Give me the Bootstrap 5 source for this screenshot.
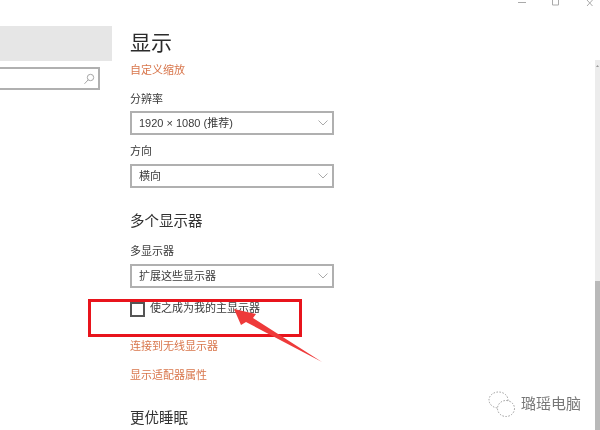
<!DOCTYPE html>
<html lang="zh-CN">
<head>
  <meta charset="UTF-8">
  <title>显示</title>
  <link href="https://cdn.jsdelivr.net/npm/bootstrap@5.3.3/dist/css/bootstrap.min.css" rel="stylesheet">
  <style>
    html, body { height: 100%; overflow: hidden; }
    body { font-family: "Liberation Sans", "Noto Sans CJK SC", sans-serif; color: #333; background: #fff; }
    .shot { width: 600px; height: 430px; overflow: hidden; filter: blur(0.5px); }
    .side-pane { width: 130px; padding-top: 26px; }
    .side-home { width: 112px; height: 35px; background: #e6e6e6; }
    .side-search { width: 100px; height: 23px; margin-top: 6px; border: 2px solid #b0b0b0; border-left: 0; padding-right: 3px; }
    .main-pane { width: 204px; padding-top: 28px; }
    .page-title { font-size: 21px; line-height: 30px; font-weight: 400; margin: 0; color: #2b2b2b; }
    .link-orange { display: block; font-size: 11px; line-height: 16px; color: #d8764c; text-decoration: none; }
    .field-label { font-size: 11px; line-height: 16px; color: #3a3a3a; }
    .fake-select { height: 24px; border: 2px solid #b0b0b0; padding: 0 4px 0 7px; font-size: 11px; color: #3a3a3a; }
    .sub-title { font-size: 14.5px; line-height: 20px; color: #333; margin: 0; font-weight: 400; }
    .tick-box { width: 15px; height: 15px; border: 2px solid #555; flex: none; }
    .tick-row { gap: 5px; margin-top: 14px; }
    .tick-row .field-label { line-height: 13px; }
    .sp-4 { margin-top: 4px; }
    .sp-5 { margin-top: 5px; }
    .sp-8 { margin-top: 8px; }
    .sp-12 { margin-top: 12px; }
    .sp-13 { margin-top: 13px; }
    .sp-21 { margin-top: 21px; }
    .sp-23 { margin-top: 23px; }
    .sp-25 { margin-top: 25px; }
    .scroll-track { width: 5px; height: 370px; margin-top: 60px; background: #ececec; padding-top: 221px; }
    .scroll-thumb { height: 149px; background: #b9b9b9; }
    .scroll-up { left: 596px; top: 65px; }
    .win-btns { top: 0; right: 6px; gap: 26px; }
    .red-frame { left: 88px; top: 299px; width: 214px; height: 38px; border: 3px solid #e8141c; }
    .arrow-over { left: 230px; top: 305px; }
    .mark-over { left: 488px; top: 391px; color: #777; font-size: 15px; gap: 5px; }
  </style>
</head>
<body>
  <div class="shot position-relative d-flex">
    <div class="side-pane flex-shrink-0">
      <div class="side-home"></div>
      <div class="side-search d-flex align-items-center justify-content-end">
        <svg width="12" height="12" viewBox="0 0 12 12" fill="none" stroke="#a5a5a5" stroke-width="1"><circle cx="7.5" cy="4.5" r="3.2"/><path d="M5.2 6.8 1.5 10.8"/></svg>
      </div>
    </div>

    <div class="main-pane flex-shrink-0">
      <h1 class="page-title">显示</h1>
      <a class="link-orange sp-4" href="#">自定义缩放</a>

      <div class="field-label sp-13">分辨率</div>
      <div class="fake-select d-flex align-items-center justify-content-between sp-4">
        <span>1920 × 1080 (推荐)</span>
        <svg width="10" height="6" viewBox="0 0 10 6" fill="none" stroke="#aaa"><path d="M.5 .5 5 5 9.5 .5"/></svg>
      </div>

      <div class="field-label sp-8">方向</div>
      <div class="fake-select d-flex align-items-center justify-content-between sp-5">
        <span>横向</span>
        <svg width="10" height="6" viewBox="0 0 10 6" fill="none" stroke="#aaa"><path d="M.5 .5 5 5 9.5 .5"/></svg>
      </div>

      <h2 class="sub-title sp-23">多个显示器</h2>
      <div class="field-label sp-12">多显示器</div>
      <div class="fake-select d-flex align-items-center justify-content-between sp-5">
        <span>扩展这些显示器</span>
        <svg width="10" height="6" viewBox="0 0 10 6" fill="none" stroke="#aaa"><path d="M.5 .5 5 5 9.5 .5"/></svg>
      </div>

      <div class="tick-row d-flex align-items-start">
        <span class="tick-box"></span>
        <span class="field-label">使之成为我的主显示器</span>
      </div>

      <a class="link-orange sp-21" href="#">连接到无线显示器</a>
      <a class="link-orange sp-13" href="#">显示适配器属性</a>
      <h2 class="sub-title sp-25">更优睡眠</h2>
    </div>

    <div class="flex-grow-1"></div>
    <div class="scroll-track flex-shrink-0"><div class="scroll-thumb"></div></div>
    <svg class="scroll-up position-absolute" width="3" height="2" viewBox="0 0 3 2"><path d="M1.5 0 3 2H0Z" fill="#999"/></svg>

    <div class="win-btns position-absolute d-flex">
      <svg width="8" height="6" viewBox="0 0 8 6" stroke="#aaa"><path d="M0 2.5h8"/></svg>
      <svg width="8" height="6" viewBox="0 0 8 6" fill="none" stroke="#aaa"><path d="M.5 0v5h6V0"/></svg>
      <svg width="8" height="6" viewBox="0 0 8 6" stroke="#aaa"><path d="M1 0l5.500 6M6.500 0 1 6"/></svg>
    </div>

    <div class="red-frame position-absolute"></div>
    <svg class="arrow-over position-absolute" width="95" height="60" viewBox="230 305 95 60">
      <path d="M234 309 256 314 253 318 322 362 246 322 241 325Z" fill="#ee3a3a"/>
    </svg>

    <div class="mark-over position-absolute d-flex align-items-center">
      <svg width="28" height="27" viewBox="0 0 28 27" fill="none" stroke="#999" stroke-width="1" stroke-dasharray="1.500 1.500"><ellipse cx="10.500" cy="9" rx="9.500" ry="8"/><ellipse cx="18" cy="17.500" rx="8.500" ry="8" fill="#fff"/></svg>
      <span>璐瑶电脑</span>
    </div>
  </div>
  <script src="https://cdn.jsdelivr.net/npm/bootstrap@5.3.3/dist/js/bootstrap.bundle.min.js"></script>
</body>
</html>
